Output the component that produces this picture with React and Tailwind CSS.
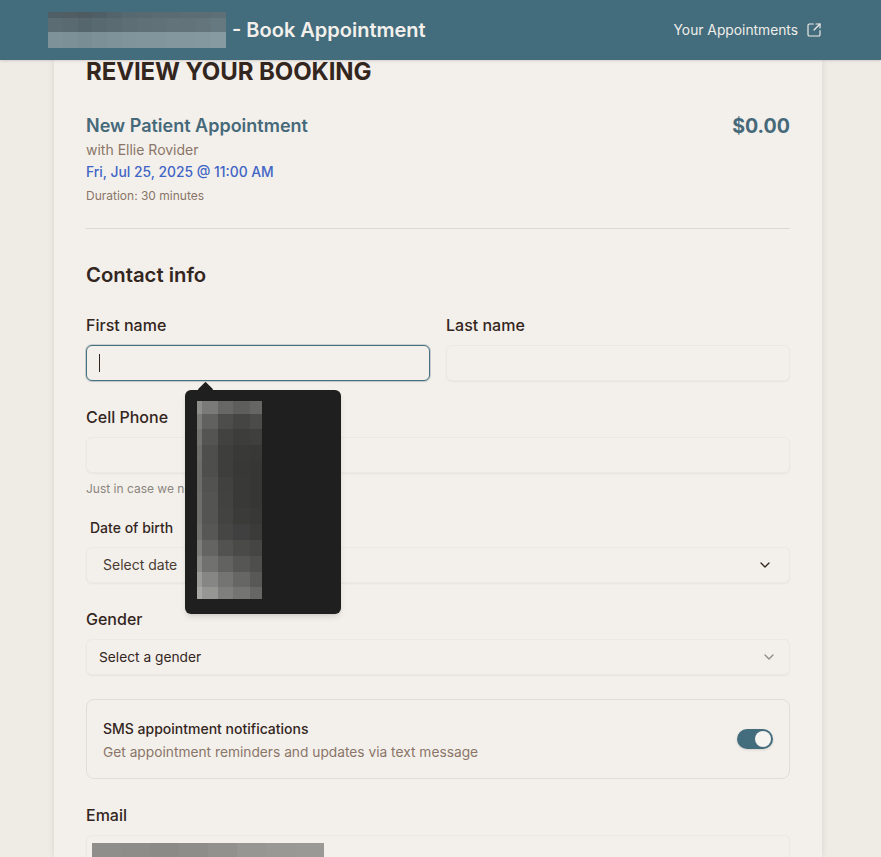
import React from "react";
import { ChevronDown, SquareArrowOutUpRight } from "lucide-react";

const headerRows = [
  { h: "h-[6px]", cells: ["#4f5f65", "#505e64", "#4e5c62", "#4f5f65", "#53646a", "#566870", "#586a70", "#5a6c72", "#5a6c72", "#5c6e74", "#5c6e74", "#5e7076"] },
  { h: "h-[14px]", cells: ["#5b6d73", "#596a70", "#55666c", "#586a70", "#5a6c72", "#5d6f75", "#5f7177", "#607278", "#62747a", "#62747a", "#64767c", "#667880"] },
  { h: "h-[16px]", cells: ["#7d9299", "#7b9097", "#788d94", "#7b9097", "#7d9299", "#7f949b", "#80959c", "#80959c", "#82979e", "#82979e", "#84999f", "#859aa1"] },
];

const tipCols = ["w-[5px]", "w-4", "w-[15px]", "w-[17px]", "w-3"];
const tipRows = [
  { h: "h-[13px]", c: ["#8e8e8a", "#7a7a77", "#676765", "#5e5e5c", "#666664"] },
  { h: "h-[15px]", c: ["#7b7b78", "#616160", "#4d4d4b", "#454544", "#4b4b4a"] },
  { h: "h-4", c: ["#737370", "#545452", "#424241", "#3d3d3c", "#3f3f3e"] },
  { h: "h-4", c: ["#6e6e6b", "#4e4e4d", "#3e3e3d", "#393938", "#383837"] },
  { h: "h-4", c: ["#6c6c69", "#4e4e4d", "#3e3e3d", "#383837", "#363635"] },
  { h: "h-[15px]", c: ["#6c6c69", "#525250", "#414140", "#393938", "#363635"] },
  { h: "h-4", c: ["#6e6e6b", "#545452", "#424241", "#393938", "#363635"] },
  { h: "h-4", c: ["#6e6e6b", "#545452", "#434342", "#3b3b3a", "#383837"] },
  { h: "h-4", c: ["#727270", "#575755", "#464645", "#404040", "#3b3b3a"] },
  { h: "h-4", c: ["#7d7d7a", "#646462", "#525250", "#4a4a49", "#454544"] },
  { h: "h-4", c: ["#8a8a87", "#717170", "#626260", "#565654", "#4e4e4d"] },
  { h: "h-[15px]", c: ["#9c9c98", "#868684", "#747472", "#666664", "#585857"] },
  { h: "h-3", c: ["#a8a8a4", "#969693", "#7f7f7d", "#747472", "#666664"] },
];

const emailCells = ["#8f8e8a", "#8e8c89", "#8b8a86", "#8f8d8a", "#93918e", "#989693", "#9a9895", "#9b9996"];

function Field({ children, className = "" }) {
  return (
    <div className={`h-9 rounded-md border border-[#ece8e2] bg-[#f3f0eb] shadow-xs ${className}`}>{children}</div>
  );
}

function Label({ children }) {
  return <div className="h-6 text-base leading-6 font-medium text-[#33261e]">{children}</div>;
}

export default function App() {
  return (
    <div className="relative h-screen overflow-hidden bg-[#efebe5] font-['Inter',sans-serif]">
      <header className="relative z-10 flex h-[60px] items-center justify-between bg-[#436c7d] pr-[59px] pl-12 shadow-sm">
        <div className="flex items-center gap-[6px]">
          <div className="flex w-[178px] flex-col">
            {headerRows.map((r, i) => (
              <div key={i} className={`flex ${r.h}`}>
                {r.cells.map((c, j) => (
                  <div key={j} className="flex-1" style={{ backgroundColor: c }} />
                ))}
              </div>
            ))}
          </div>
          <span className="text-[20px] leading-7 font-semibold text-[#f3f0eb]">- Book Appointment</span>
        </div>
        <div className="flex items-center gap-2 text-[13.8px] text-[#f0eee9]">
          <span>Your Appointments</span>
          <SquareArrowOutUpRight className="size-4" strokeWidth={1.75} />
        </div>
      </header>

      <main className="ml-[54px] h-[797px] w-[768px] bg-[#f3f0eb] px-8 shadow-[0_0_6px_rgba(60,40,30,0.12)]">
        <h1 className="text-2xl leading-6 font-bold tracking-[-0.1px] text-[#33261e]">REVIEW YOUR BOOKING</h1>

        <div className="mt-7 flex items-start justify-between">
          <div>
            <div className="text-lg leading-7 font-semibold text-[#46697a]">New Patient Appointment</div>
            <div className="text-sm leading-5 text-[#8a7568]">with Ellie Rovider</div>
            <div className="mt-0.5 text-[13.85px] leading-5 font-medium text-[#4165c6]">Fri, Jul 25, 2025 @ 11:00 AM</div>
            <div className="mt-1.5 text-xs leading-4 text-[#8a7568]">Duration: 30 minutes</div>
          </div>
          <div className="text-[19.6px] leading-7 font-bold text-[#46697a]">$0.00</div>
        </div>

        <div className="mt-6 h-px bg-[#ddd8d1]" />

        <h2 className="mt-8 text-[20.3px] leading-7 font-semibold text-[#33261e]">Contact info</h2>

        <div className="mt-6 grid grid-cols-2 gap-4">
          <div>
            <Label>First name</Label>
            <div className="mt-2 flex h-9 items-center rounded-md border border-[#46707f] bg-[#f3f0eb] pl-3 shadow-xs ring-1 ring-[#46707f]/25">
              <div className="h-[18px] w-px bg-[#33261e]" />
            </div>
          </div>
          <div>
            <Label>Last name</Label>
            <Field className="mt-2" />
          </div>
        </div>

        <div className="mt-6">
          <Label>Cell Phone</Label>
          <Field className="mt-2" />
          <div className="mt-2 text-xs leading-4 text-[#8a8580]">Just in case we need to reach you</div>
        </div>

        <div className="mt-[21px]">
          <div className="pl-1 text-sm leading-5 font-medium text-[#33261e]">Date of birth</div>
          <Field className="mt-[9px] flex items-center justify-between pr-4 pl-4">
            <span className="text-sm text-[#4a3c33]">Select date</span>
            <ChevronDown className="size-4 text-[#33261e]" />
          </Field>
        </div>

        <div className="mt-6">
          <Label>Gender</Label>
          <Field className="mt-2 flex items-center justify-between pr-3 pl-3">
            <span className="text-[13.75px] text-[#33261e]">Select a gender</span>
            <ChevronDown className="size-4 text-[#8f8a85]" />
          </Field>
        </div>

        <div className="mt-6 flex h-20 items-center justify-between rounded-lg border border-[#e2ddd6] px-4">
          <div className="pt-[3px]">
            <div className="text-sm leading-5 font-medium text-[#33261e]">SMS appointment notifications</div>
            <div className="mt-[3px] text-[13.75px] leading-5 text-[#8a7568]">Get appointment reminders and updates via text message</div>
          </div>
          <div className="flex h-5 w-9 items-center justify-end rounded-full bg-[#436c7d] pr-0.5 shadow-sm">
            <div className="size-4 rounded-full bg-[#f6f4f0]" />
          </div>
        </div>

        <div className="mt-6">
          <Label>Email</Label>
          <Field className="mt-2 h-[60px] pt-[7px] pl-[5px]">
            <div className="flex h-[40px] w-[232px]">
              {emailCells.map((c, i) => (
                <div key={i} className="flex-1" style={{ backgroundColor: c }} />
              ))}
            </div>
          </Field>
        </div>
      </main>

      <div className="absolute top-[390px] left-[185px] z-20 h-56 w-[156px] rounded-md bg-[#1f1f1f] pt-[11px] pl-3 shadow-md">
        <div className="absolute -top-[6px] left-[15px] size-[11px] rotate-45 rounded-[1px] bg-[#1f1f1f]" />
        <div className="relative flex w-[65px] flex-col">
          {tipRows.map((r, i) => (
            <div key={i} className={`flex ${r.h}`}>
              {r.c.map((c, j) => (
                <div key={j} className={tipCols[j]} style={{ backgroundColor: c }} />
              ))}
            </div>
          ))}
        </div>
      </div>
    </div>
  );
}
